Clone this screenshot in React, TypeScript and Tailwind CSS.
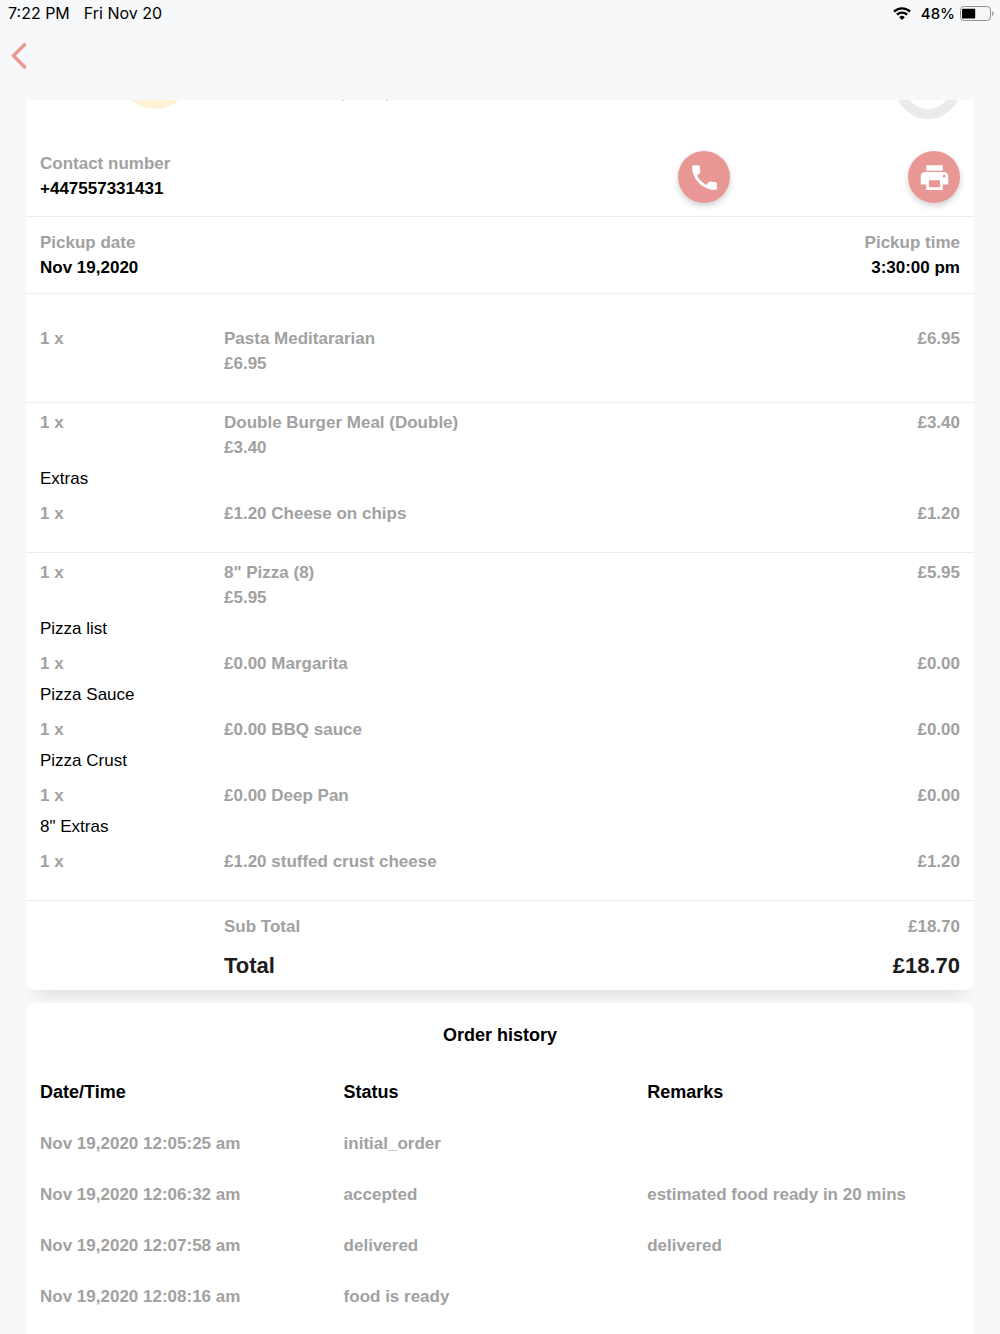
import type { ReactNode } from 'react';
import { MdPhone, MdPrint } from 'react-icons/md';

interface Extra {
  group: string;
  qty: number;
  name: string;
  price: string;
}

interface OrderItem {
  qty: number;
  name: string;
  price: string;
  extras: Extra[];
}

const ITEMS: OrderItem[] = [
  { qty: 1, name: 'Pasta Meditararian', price: '£6.95', extras: [] },
  {
    qty: 1,
    name: 'Double Burger Meal (Double)',
    price: '£3.40',
    extras: [{ group: 'Extras', qty: 1, name: 'Cheese on chips', price: '£1.20' }],
  },
  {
    qty: 1,
    name: '8" Pizza (8)',
    price: '£5.95',
    extras: [
      { group: 'Pizza list', qty: 1, name: 'Margarita', price: '£0.00' },
      { group: 'Pizza Sauce', qty: 1, name: 'BBQ sauce', price: '£0.00' },
      { group: 'Pizza Crust', qty: 1, name: 'Deep Pan', price: '£0.00' },
      { group: '8" Extras', qty: 1, name: 'stuffed crust cheese', price: '£1.20' },
    ],
  },
];

const HISTORY = [
  { date: 'Nov 19,2020 12:05:25 am', status: 'initial_order', remarks: '' },
  {
    date: 'Nov 19,2020 12:06:32 am',
    status: 'accepted',
    remarks: 'estimated food ready in 20 mins',
  },
  { date: 'Nov 19,2020 12:07:58 am', status: 'delivered', remarks: 'delivered' },
  { date: 'Nov 19,2020 12:08:16 am', status: 'food is ready', remarks: '' },
];

export default function App() {
  return (
    <div className="flex min-h-screen flex-col bg-[#f6f8fa] font-['Liberation_Sans',Arial,sans-serif] text-[17px] leading-[25px] text-black">
      <StatusBar />

      <nav className="flex h-[73px] items-start px-[11px] pt-[15px]">
        <button type="button" aria-label="Back">
          <svg className="h-7 w-4" viewBox="0 0 16 28" fill="none">
            <path d="M14.6 1.6 2.5 13.8 14.6 26" stroke="#ec9693" strokeWidth="3.4" />
          </svg>
        </button>
      </nav>

      <main className="flex flex-1 flex-col gap-[13px] px-[26px]">
        <OrderCard />
        <HistoryCard />
      </main>
    </div>
  );
}

function StatusBar() {
  return (
    <header className="flex h-[27px] items-center justify-between pr-[6px] pl-2 font-[Inter,sans-serif] text-[15px] font-medium">
      <div className="flex gap-[14px] text-[16px] font-normal">
        <span>7:22 PM</span>
        <span>Fri Nov 20</span>
      </div>
      <div className="flex items-center">
        <svg className="mr-[10px] h-[13px] w-[18px]" viewBox="0 0 18 13" fill="none">
          <path d="M1 4.6a11.6 11.6 0 0 1 16 0" stroke="#000" strokeWidth="2.4" />
          <path d="M3.9 7.6a7.4 7.4 0 0 1 10.2 0" stroke="#000" strokeWidth="2.2" />
          <path d="M9 13 6.2 10.2a4 4 0 0 1 5.6 0z" fill="#000" />
        </svg>
        <span className="mr-[5px]">48%</span>
        <svg className="h-[15px] w-[34px]" viewBox="0 0 34 15" fill="none">
          <rect x="0.5" y="0.5" width="30" height="14" rx="3.6" stroke="#8f9091" />
          <rect x="2" y="2.8" width="13.2" height="9.6" rx="1" fill="#000" />
          <path d="M32.2 5.2c2 .8 2 4 0 4.8z" fill="#8f9091" />
        </svg>
      </div>
    </header>
  );
}

function OrderCard() {
  return (
    <section className="rounded-b-lg bg-white shadow-[0_16px_16px_-12px_rgba(0,0,0,0.12)]">
      {/* Lower edge of the scrolled header: avatar, title descenders, progress ring */}
      <div className="flex h-[51px] items-start pr-[13px] pl-[105px]">
        <svg className="h-[9px] w-12" viewBox="0 0 48 9">
          <circle cx="24" cy="-27.5" r="36.5" fill="#fff3d3" />
        </svg>
        <svg className="ml-[163px] h-[2px] w-12" viewBox="0 0 48 2">
          <path d="M0 0h2v1H0zM44 0h2v1h-2z" fill="#d4d4d4" />
        </svg>
        <svg className="ml-auto h-5 w-[66px]" viewBox="0 0 66 20">
          <circle cx="33" cy="-14" r="28" fill="none" stroke="#ebebeb" strokeWidth="10" />
        </svg>
      </div>

      <div className="grid grid-cols-[2fr_1fr_1fr] border-b border-[#ececec] px-[14px] pb-[13px]">
        <Field label="Contact number" value="+447557331431" />
        <RoundButton label="Call customer">
          <MdPhone size={33} />
        </RoundButton>
        <RoundButton label="Print order">
          <MdPrint size={33} />
        </RoundButton>
      </div>

      <div className="flex justify-between border-b border-[#ececec] px-[14px] py-[13px]">
        <Field label="Pickup date" value="Nov 19,2020" />
        <div className="text-right">
          <Field label="Pickup time" value="3:30:00 pm" />
        </div>
      </div>

      <ul className="pt-[25px]">
        {ITEMS.map((item) => (
          <li key={item.name} className="border-b border-[#ececec] px-[14px] pt-[7px] pb-[26px]">
            <div className="grid grid-cols-[20%_1fr_auto] font-bold text-[#a1a1a1]">
              <span>{item.qty} x</span>
              <div>
                <p>{item.name}</p>
                <p>{item.price}</p>
              </div>
              <span>{item.price}</span>
            </div>
            {item.extras.map((extra) => (
              <div key={extra.group} className="pt-[6px]">
                <h3>{extra.group}</h3>
                <div className="mt-[10px] grid grid-cols-[20%_1fr_auto] font-bold text-[#a1a1a1]">
                  <span>{extra.qty} x</span>
                  <span>
                    {extra.price} {extra.name}
                  </span>
                  <span>{extra.price}</span>
                </div>
              </div>
            ))}
          </li>
        ))}
      </ul>

      <dl className="px-[14px] pt-[13px] pb-3 font-bold">
        <div className="grid grid-cols-[20%_1fr_auto] text-[#a1a1a1]">
          <dt className="col-start-2">Sub Total</dt>
          <dd>£18.70</dd>
        </div>
        <div className="mt-[14px] grid grid-cols-[20%_1fr_auto] text-[22px] text-[#1c1c1c]">
          <dt className="col-start-2">Total</dt>
          <dd>£18.70</dd>
        </div>
      </dl>
    </section>
  );
}

function HistoryCard() {
  return (
    <section className="relative flex-1 rounded-t-lg bg-white px-[14px] pt-5">
      <h2 className="mb-[19px] text-center text-[18px] font-bold">Order history</h2>
      <table className="w-full table-fixed text-left font-bold">
        <thead className="text-[18px]">
          <tr>
            <th className="w-[33%] py-[13px]">Date/Time</th>
            <th className="w-[33%] py-[13px]">Status</th>
            <th className="py-[13px]">Remarks</th>
          </tr>
        </thead>
        <tbody className="text-[#a1a1a1]">
          {HISTORY.map((entry) => (
            <tr key={entry.date}>
              <td className="py-[13px]">{entry.date}</td>
              <td className="py-[13px]">{entry.status}</td>
              <td className="py-[13px]">{entry.remarks}</td>
            </tr>
          ))}
        </tbody>
      </table>
    </section>
  );
}

function Field({ label, value }: { label: string; value: string }) {
  return (
    <div className="font-bold">
      <p className="text-[#a1a1a1]">{label}</p>
      <p>{value}</p>
    </div>
  );
}

function RoundButton({ label, children }: { label: string; children: ReactNode }) {
  return (
    <button
      type="button"
      aria-label={label}
      className="flex h-[52px] w-[52px] items-center justify-center justify-self-end rounded-full bg-[#e89794] text-white shadow-[0_3px_6px_rgba(0,0,0,0.18)]"
    >
      {children}
    </button>
  );
}
